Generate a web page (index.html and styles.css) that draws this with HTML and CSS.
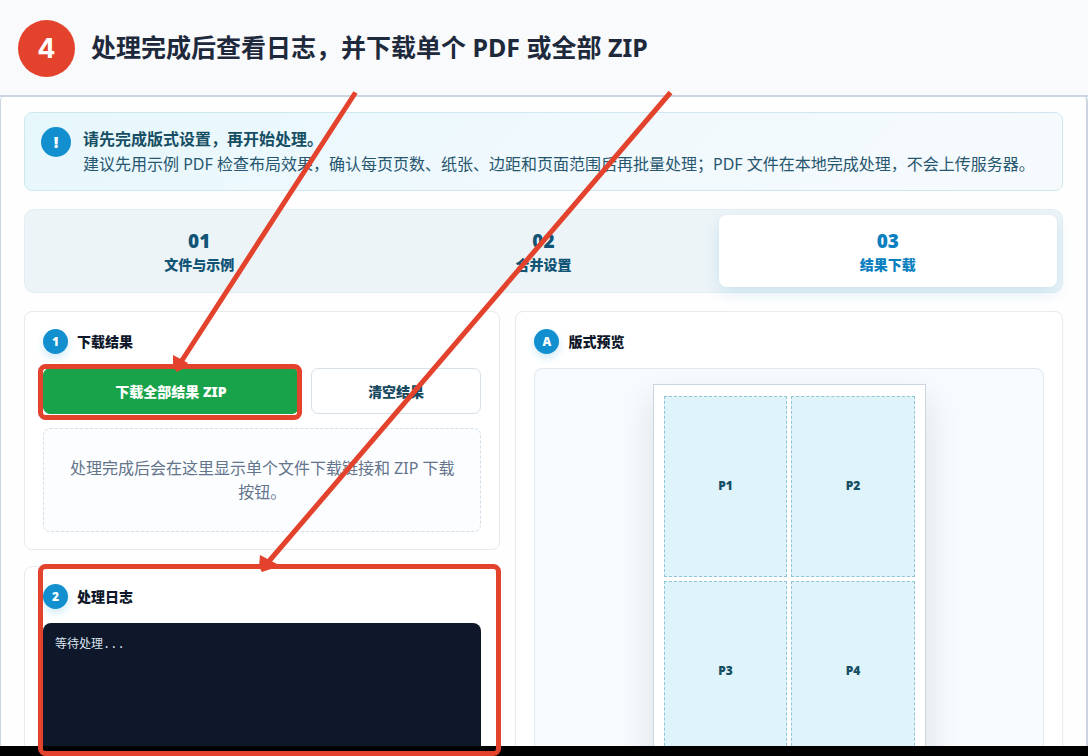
FILE: index.html
```html
<!DOCTYPE html>
<html lang="zh-CN">
<head>
    <meta charset="UTF-8">
    <meta name="viewport" content="width=device-width, initial-scale=1.0">
    <title>处理完成后查看日志</title>
    <link rel="stylesheet" href="styles.css">
</head>
<body>
    <header class="step-header">
        <span class="step-number">4</span>
        <h1>处理完成后查看日志，并下载单个 PDF 或全部 ZIP</h1>
    </header>

    <main class="app">
        <section class="notice">
            <span class="notice-icon">!</span>
            <div>
                <h2>请先完成版式设置，再开始处理。</h2>
                <p>建议先用示例 PDF 检查布局效果，确认每页页数、纸张、边距和页面范围后再批量处理；PDF 文件在本地完成处理，不会上传服务器。</p>
            </div>
        </section>

        <nav class="tabs">
            <button type="button" class="tab"><strong>01</strong><span>文件与示例</span></button>
            <button type="button" class="tab"><strong>02</strong><span>合并设置</span></button>
            <button type="button" class="tab active"><strong>03</strong><span>结果下载</span></button>
        </nav>

        <div class="columns">
            <div class="column">
                <section class="panel">
                    <div class="panel-head">
                        <span class="badge">1</span>
                        <h3>下载结果</h3>
                    </div>
                    <div class="actions">
                        <button type="button" class="btn btn-primary">下载全部结果 ZIP</button>
                        <button type="button" class="btn">清空结果</button>
                    </div>
                    <p class="empty">处理完成后会在这里显示单个文件下载链接和 ZIP 下载按钮。</p>
                </section>

                <section class="panel">
                    <div class="panel-head">
                        <span class="badge">2</span>
                        <h3>处理日志</h3>
                    </div>
                    <pre class="log">等待处理...</pre>
                </section>
            </div>

            <section class="panel">
                <div class="panel-head">
                    <span class="badge">A</span>
                    <h3>版式预览</h3>
                </div>
                <div class="preview">
                    <div class="sheet">
                        <div class="cell">P1</div>
                        <div class="cell">P2</div>
                        <div class="cell">P3</div>
                        <div class="cell">P4</div>
                    </div>
                </div>
            </section>
        </div>
    </main>

    <div class="bottom-bar"></div>

    <!-- Callout arrows and frames -->
    <svg class="callouts" width="1088" height="756" viewBox="0 0 1088 756" aria-hidden="true">
        <g fill="none" stroke="#e3432d" stroke-width="5">
            <rect x="40.5" y="366.500" width="259" height="51" rx="5"/>
            <rect x="40.5" y="566.500" width="458" height="187" rx="5"/>
            <path d="M355.500 92.500L179 365M670.500 92.500L264 567"/>
        </g>
        <g fill="#e3432d">
            <path d="M173 355L188 363L184 368L177 372L173 367Z"/>
            <path d="M260 555L277 564L271 569L262 572L259 567Z"/>
        </g>
    </svg>
</body>
</html>
```

FILE: styles.css
```css
* {
    box-sizing: border-box;
}

body {
    display: flex;
    flex-direction: column;
    position: relative;
    height: 100vh;
    margin: 0;
    overflow: hidden;
    background-color: #f8fafc;
    color: #0f172a;
    font-family: "Noto Sans", "Noto Sans CJK SC", sans-serif;
    font-size: 16px;
    line-height: 24px;
}

h1, h2, h3, p {
    margin: 0;
}

button {
    font-family: inherit;
    cursor: pointer;
}

.step-header {
    display: flex;
    align-items: center;
    flex-shrink: 0;
    gap: 16px;
    padding: 20px 18px 18px;
    border-bottom: 2px solid #cbd5e1;
}

.step-number {
    display: flex;
    align-items: center;
    justify-content: center;
    width: 57px;
    height: 57px;
    border-radius: 50%;
    background-color: #e3432d;
    color: white;
    font-family: Inter, sans-serif;
    font-size: 27px;
    font-weight: 700;
}

h1 {
    padding-bottom: 4px;
    color: #1e293b;
    font-size: 25px;
    font-weight: 700;
    line-height: 36px;
}

.app {
    flex: 1;
    min-height: 0;
    padding: 15px 23px 0;
    overflow: hidden;
    border-left: 1px solid #cbd5e1;
    border-right: 2px solid #cbd5e1;
    border-radius: 4px 4px 0 0;
    background-color: #fefefe;
}

.bottom-bar {
    flex-shrink: 0;
    height: 10px;
    background-color: black;
}

.notice {
    display: flex;
    gap: 12px;
    margin-bottom: 18px;
    padding: 14px 16px;
    border: 1px solid #cfe8ef;
    border-radius: 8px;
    background: linear-gradient(135deg, #e6f7fc, #f0f9fd 50%, #f6fafd);
    color: #27566f;
}

.notice h2 {
    color: #164e63;
    font-size: 16px;
    font-weight: 700;
    line-height: 25px;
}

.notice-icon {
    display: flex;
    align-items: center;
    justify-content: center;
    flex-shrink: 0;
    width: 30px;
    height: 30px;
    border-radius: 50%;
    background-color: #118fcf;
    color: white;
    font-weight: 900;
}

.tabs {
    display: grid;
    grid-template-columns: repeat(3, 1fr);
    gap: 6px;
    margin-bottom: 18px;
    padding: 5px;
    border: 1px solid #e2eef2;
    border-radius: 10px;
    background-color: #ecf4f7;
}

.tab {
    display: flex;
    flex-direction: column;
    align-items: center;
    padding: 14px 12px 10px;
    border: 0;
    border-radius: 8px;
    background: none;
    color: #125476;
    font-size: 14px;
    font-weight: 900;
    line-height: 24px;
}

.tab strong {
    font-family: "Open Sans", sans-serif;
    font-size: 19px;
    font-weight: 900;
}

.tab.active {
    background-color: white;
    box-shadow: 0 6px 16px rgba(14, 130, 200, 0.14);
    color: #0a7fbf;
}

.columns {
    display: grid;
    grid-template-columns: 87fr 100fr;
    gap: 15px;
}

.column {
    display: flex;
    flex-direction: column;
    gap: 16px;
}

.panel {
    padding: 17px 18px;
    border: 1px solid #e5ebef;
    border-radius: 8px;
    background-color: white;
}

.panel-head {
    display: flex;
    align-items: center;
    gap: 9px;
    margin-bottom: 14px;
}

.badge {
    display: flex;
    align-items: center;
    justify-content: center;
    width: 25px;
    height: 25px;
    border-radius: 50%;
    background-color: #118fcf;
    box-shadow: 0 4px 8px rgba(17, 143, 207, 0.2);
    color: white;
    font-family: "Open Sans", sans-serif;
    font-size: 12px;
    font-weight: 900;
}

h3 {
    font-size: 14px;
    font-weight: 900;
}

.actions {
    display: grid;
    grid-template-columns: 3fr 2fr;
    gap: 12px;
    margin-bottom: 14px;
}

.btn {
    height: 46px;
    border: 1px solid #d9e1e8;
    border-radius: 7px;
    background-color: white;
    color: #174a60;
    font-size: 14px;
    font-weight: 900;
}

.btn-primary {
    border-color: #18a34a;
    background-color: #18a34a;
    color: white;
}

.empty {
    padding: 27px 24px;
    border: 1px dashed #d3dee6;
    border-radius: 7px;
    background-color: #fbfdff;
    color: #64748b;
    text-align: center;
}

.log {
    height: 260px;
    margin: 0;
    padding: 12px;
    border-radius: 8px;
    background-color: #0f172a;
    color: #dbe5f0;
    font-family: "Liberation Mono", "Noto Sans CJK SC", monospace;
    font-size: 12px;
    line-height: 20px;
}

.preview {
    display: flex;
    justify-content: center;
    padding: 15px;
    border: 1px solid #e2e8ee;
    border-radius: 8px;
    background-color: #f7fbfe;
}

.sheet {
    display: grid;
    grid-template-columns: 1fr 1fr;
    grid-template-rows: 1fr 1fr;
    gap: 4px;
    width: 273px;
    aspect-ratio: 273 / 389;
    padding: 11px 10px;
    border: 1px solid #cbd5e1;
    background-color: white;
    box-shadow: 0 16px 32px rgba(15, 23, 42, 0.12);
}

.cell {
    display: flex;
    align-items: center;
    justify-content: center;
    border: 1px dashed #92c5d4;
    background-color: #dff3fb;
    color: #164e63;
    font-family: "Open Sans", sans-serif;
    font-size: 12px;
    font-weight: 900;
}

.callouts {
    position: absolute;
    top: 0;
    left: 0;
}
```
